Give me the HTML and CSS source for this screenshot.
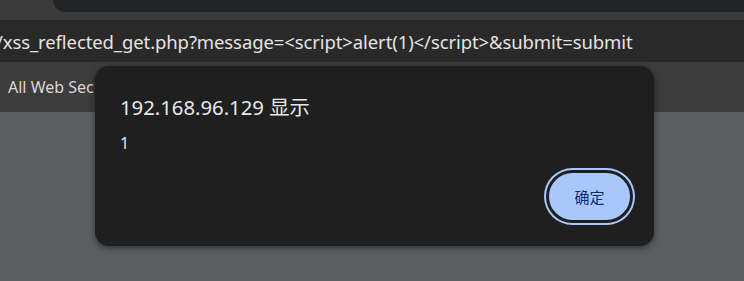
FILE: index.html
```html
<!DOCTYPE html>
<html lang="zh-CN">
<head>
  <meta charset="UTF-8" />
  <title>alert</title>
  <link rel="stylesheet" href="styles.css">
</head>
<body>
  <div class="tabstrip">
    <div class="tab"></div>
  </div>
  <div class="gap"></div>
  <div class="omnibox">
    <span class="url">/xss_reflected_get.php?message=&lt;script&gt;alert(1)&lt;/script&gt;&amp;submit=submit</span>
  </div>
  <div class="bookmarks">
    <span class="bm">All Web Sec</span>
  </div>
  <div class="page"></div>

  <div class="dialog">
    <div class="title">192.168.96.129 显示</div>
    <div class="message">1</div>
    <div class="actions">
      <button class="ok">确定</button>
    </div>
  </div>
</body>
</html>
```

FILE: styles.css
```css
body {
  margin: 0;
  width: 744px;
  height: 281px;
  overflow: hidden;
  background-color: #5c5d5f;
  font-family: "Noto Sans", "Noto Sans CJK SC", sans-serif;
  position: relative;
}

.tabstrip {
  height: 12px;
  background-color: #3a3a3a;
  padding-left: 53px;
}

.tab {
  height: 12px;
  background-color: #232425;
  border-bottom-left-radius: 12px;
}

.gap {
  height: 8px;
  background-color: #3a3a3a;
}

.omnibox {
  height: 42px;
  background-color: #292929;
  display: flex;
  align-items: center;
  overflow: hidden;
  white-space: nowrap;
}

.url {
  color: #e3e3e3;
  font-size: 18.5px;
  margin-left: -4px;
  letter-spacing: -0.1px;
}

.bookmarks {
  height: 50px;
  background-color: #3c3c3c;
  display: flex;
  align-items: center;
  white-space: nowrap;
}

.bm {
  color: #d8d8d8;
  font-size: 16px;
  margin-left: 8px;
}

.dialog {
  position: absolute;
  left: 95px;
  top: 66px;
  width: 559px;
  height: 180px;
  box-sizing: border-box;
  background-color: #1f1f1f;
  border-radius: 14px;
  box-shadow: 0 2px 6px rgba(0, 0, 0, 0.45);
  padding: 28px 20px 0 25px;
  display: flex;
  flex-direction: column;
}

.title {
  color: #e8e8e8;
  font-size: 20.3px;
  line-height: 26px;
}

.message {
  color: #e3e3e3;
  font-size: 16px;
  line-height: 20px;
  margin-top: 13px;
}

.actions {
  display: flex;
  justify-content: flex-end;
  margin-top: 17px;
}

.ok {
  width: 87px;
  height: 53px;
  border-radius: 28px;
  background-color: #a8c7fa;
  border: 3px solid #1f1f1f;
  box-shadow: 0 0 0 2px #a8c7fa;
  color: #062e6f;
  font-family: "Noto Sans CJK SC", sans-serif;
  font-size: 15px;
  margin-right: 1px;
}
```
